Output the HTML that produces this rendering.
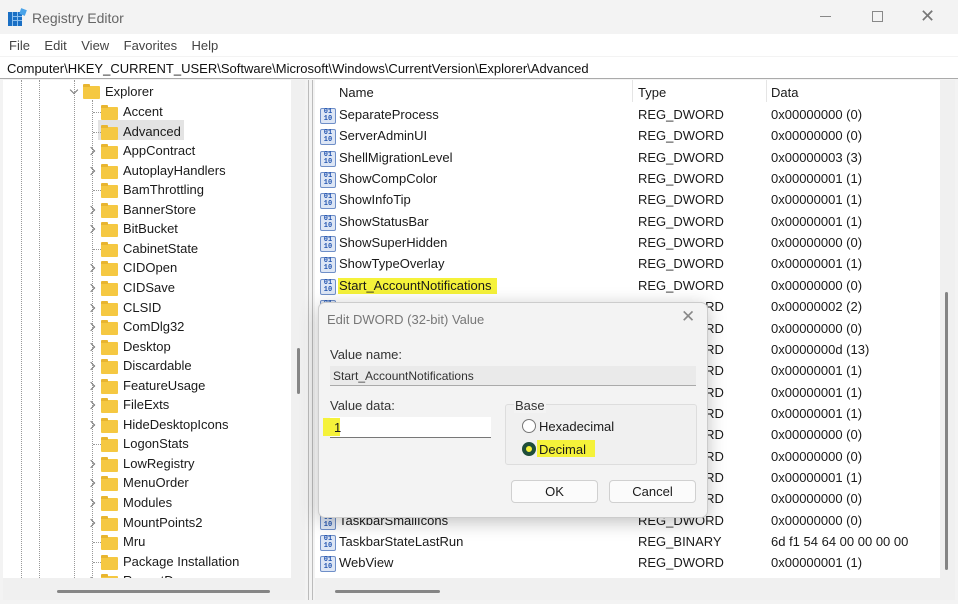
<!DOCTYPE html>
<html><head><meta charset="utf-8"><style>
*{margin:0;padding:0;box-sizing:border-box}
body{width:958px;height:604px;overflow:hidden;background:#f3f3f3;font-family:"Liberation Sans",sans-serif;font-size:13px;color:#1a1a1a;position:relative}
.a{position:absolute;white-space:nowrap}
.fold{position:absolute;width:17px;height:13px;background:#f5c842;border-radius:1px}
.fold:before{content:"";position:absolute;left:0;top:-2px;width:7px;height:3px;background:#e8b530;border-radius:1px 1px 0 0}
.chev{position:absolute;width:6px;height:6px;border-right:1.3px solid #777;border-bottom:1.3px solid #777;transform:rotate(-45deg)}
.ico{position:absolute;width:16px;height:16px;background:#dde6f5;border:1px solid #6f8fc8;border-radius:2px;font:bold 7px/7px "Liberation Mono",monospace;color:#2355b0;text-align:center;padding-top:0px}
.dot{position:absolute;border-left:1px dotted #999}
</style></head><body>
<!-- title -->
<div class="a" style="left:8px;top:9px;width:18px;height:17px">
<div style="position:absolute;left:0;top:3px;width:14px;height:14px;background:#1a6fc4"></div>
<div style="position:absolute;left:4px;top:7px;width:10px;height:1px;background:#8cc0ef"></div>
<div style="position:absolute;left:4px;top:11px;width:10px;height:1px;background:#8cc0ef"></div>
<div style="position:absolute;left:4px;top:3px;width:1px;height:14px;background:#8cc0ef"></div>
<div style="position:absolute;left:9px;top:3px;width:1px;height:14px;background:#8cc0ef"></div>
<div style="position:absolute;left:12px;top:0;width:6px;height:6px;background:#4aa3e8;transform:rotate(20deg)"></div>
</div>
<div class="a" style="left:32px;top:10px;color:#666;font-size:14px">Registry Editor</div>
<div class="a" style="left:820px;top:16px;width:11px;height:1px;background:#888"></div>
<div class="a" style="left:872px;top:11px;width:11px;height:11px;border:1px solid #888"></div>
<div class="a" style="left:920px;top:6px;font-size:18px;color:#777">✕</div>
<!-- menu -->
<div class="a" style="left:0;top:34px;width:958px;height:22px;background:#fff"></div>
<div class="a" style="left:9px;top:38px;color:#444">File&nbsp;&nbsp;&nbsp; Edit&nbsp;&nbsp;&nbsp; View&nbsp;&nbsp;&nbsp; Favorites&nbsp;&nbsp;&nbsp; Help</div>
<div class="a" style="left:0;top:57px;width:958px;height:22px;background:#fff;border-bottom:1px solid #aaa"></div>
<div class="a" style="left:7px;top:61px;font-size:13px;color:#111">Computer\HKEY_CURRENT_USER\Software\Microsoft\Windows\CurrentVersion\Explorer\Advanced</div>
<!-- tree pane -->
<div class="a" style="left:3px;top:80px;width:288px;height:498px;background:#fff;overflow:hidden">
<div class="dot" style="left:18px;top:0;height:498px"></div>
<div class="dot" style="left:36px;top:0;height:498px"></div>
<div class="dot" style="left:71px;top:0;height:498px"></div>
<div class="dot" style="left:89px;top:20px;height:478px"></div>
<div class="chev" style="left:68px;top:7px;transform:rotate(45deg)"></div>
<div class="fold" style="left:80px;top:6px"></div>
<div class="a" style="left:102px;top:4px">Explorer</div>
<div class="a" style="left:95px;top:40px;width:86px;height:20px;background:#e3e3e3"></div>
<div id="tree"></div>
</div>
<div class="a" style="left:291px;top:80px;width:14px;height:498px;background:#f0f0f0"></div>
<div class="a" style="left:297px;top:348px;width:3px;height:46px;background:#858585;border-radius:2px"></div>
<div class="a" style="left:3px;top:578px;width:302px;height:22px;background:#f0f0f0"></div>
<div class="a" style="left:57px;top:590px;width:213px;height:3px;background:#858585;border-radius:2px"></div>
<div class="a" style="left:308px;top:80px;width:1px;height:520px;background:#bbb"></div>
<div class="a" style="left:312px;top:80px;width:1px;height:520px;background:#bbb"></div>
<!-- list pane -->
<div class="a" style="left:315px;top:80px;width:625px;height:498px;background:#fff;overflow:hidden" id="list">
<div class="a" style="left:317px;top:0;width:1px;height:22px;background:#e5e5e5"></div>
<div class="a" style="left:451px;top:0;width:1px;height:22px;background:#e5e5e5"></div>
<div class="a" style="left:24px;top:5px">Name</div>
<div class="a" style="left:323px;top:5px">Type</div>
<div class="a" style="left:456px;top:5px">Data</div>
</div>
<div class="a" style="left:940px;top:80px;width:15px;height:498px;background:#f0f0f0"></div>
<div class="a" style="left:945px;top:292px;width:3px;height:278px;background:#858585;border-radius:2px"></div>
<div class="a" style="left:315px;top:578px;width:640px;height:22px;background:#f0f0f0"></div>
<div class="a" style="left:335px;top:590px;width:105px;height:3px;background:#858585;border-radius:2px"></div>
<!-- dialog -->
<div class="a" style="left:318px;top:302px;width:390px;height:216px;background:#f3f3f3;border:1px solid #ccc;border-radius:7px;box-shadow:0 4px 18px rgba(0,0,0,.25)">
<div class="a" style="left:8px;top:9px;color:#777;font-size:13px">Edit DWORD (32-bit) Value</div>
<div class="a" style="left:362px;top:4px;font-size:17px;color:#888">✕</div>
<div class="a" style="left:11px;top:44px;color:#333">Value name:</div>
<div class="a" style="left:11px;top:63px;width:366px;height:20px;background:#eaeaea;border-bottom:1px solid #aaa"></div>
<div class="a" style="left:14px;top:66px;font-size:12px;color:#333">Start_AccountNotifications</div>
<div class="a" style="left:11px;top:95px;color:#333">Value data:</div>
<div class="a" style="left:11px;top:114px;width:161px;height:21px;background:#fff;border-bottom:1px solid #777"></div>
<div class="a" style="left:4px;top:115px;width:17px;height:18px;background:#f5f23a"></div>
<div class="a" style="left:15px;top:117px">1</div>
<div class="a" style="left:186px;top:101px;width:192px;height:61px;border:1px solid #ddd;border-radius:3px;background:#f0f0f0"></div>
<div class="a" style="left:195px;top:95px;color:#333;background:#f3f3f3;padding:0 1px">Base</div>
<div class="a" style="left:203px;top:116px;width:14px;height:14px;border:1px solid #777;border-radius:50%;background:#fff"></div>
<div class="a" style="left:220px;top:116px">Hexadecimal</div>
<div class="a" style="left:218px;top:137px;width:58px;height:17px;background:#f5f23a"></div>
<div class="a" style="left:203px;top:139px;width:14px;height:14px;border:4px solid #1f4e3a;border-radius:50%;background:#f5f23a"></div>
<div class="a" style="left:220px;top:139px">Decimal</div>
<div class="a" style="left:192px;top:177px;width:87px;height:23px;background:#fbfbfb;border:1px solid #d0d0d0;border-radius:4px;text-align:center;line-height:21px">OK</div>
<div class="a" style="left:290px;top:177px;width:87px;height:23px;background:#fbfbfb;border:1px solid #d0d0d0;border-radius:4px;text-align:center;line-height:21px">Cancel</div>
</div>
<script>
var t=[["Accent",0],["Advanced",0],["AppContract",1],["AutoplayHandlers",1],["BamThrottling",0],["BannerStore",1],["BitBucket",1],["CabinetState",0],["CIDOpen",1],["CIDSave",1],["CLSID",1],["ComDlg32",1],["Desktop",1],["Discardable",1],["FeatureUsage",1],["FileExts",1],["HideDesktopIcons",1],["LogonStats",0],["LowRegistry",1],["MenuOrder",1],["Modules",1],["MountPoints2",1],["Mru",0],["Package Installation",0],["RecentDocs",1]];
var h="",tr=document.getElementById("tree");
t.forEach(function(r,i){var y=24+i*19.55;
if(r[1])h+='<div class="chev" style="left:85px;top:'+(y+5)+'px"></div>';else h+='<div class="dot" style="left:90px;top:'+(y+8)+'px;width:8px;border-left:0;border-top:1px dotted #999;height:0"></div>';
h+='<div class="fold" style="left:98px;top:'+(y+3)+'px"></div><div class="a" style="left:120px;top:'+y+'px">'+r[0]+'</div>';});
tr.innerHTML=h;
var L=[["SeparateProcess","0x00000000 (0)"],["ServerAdminUI","0x00000000 (0)"],["ShellMigrationLevel","0x00000003 (3)"],["ShowCompColor","0x00000001 (1)"],["ShowInfoTip","0x00000001 (1)"],["ShowStatusBar","0x00000001 (1)"],["ShowSuperHidden","0x00000000 (0)"],["ShowTypeOverlay","0x00000001 (1)"],["Start_AccountNotifications","0x00000000 (0)"],["Start_Layout","0x00000002 (2)"],["Start_NotifyNewApps","0x00000000 (0)"],["Start_TrackDocs","0x0000000d (13)"],["Start_TrackProgs","0x00000001 (1)"],["StartMenuInit","0x00000001 (1)"],["StoreAppsOnTaskbar","0x00000001 (1)"],["TaskbarAnimations","0x00000000 (0)"],["TaskbarAutoHideInTabletMode","0x00000000 (0)"],["TaskbarDa","0x00000001 (1)"],["TaskbarMn","0x00000000 (0)"],["TaskbarSmallIcons","0x00000000 (0)"],["TaskbarStateLastRun","6d f1 54 64 00 00 00 00"],["WebView","0x00000001 (1)"],["WinXMigrationLevel","0x00000001 (1)"]];
h="";
L.forEach(function(r,i){var y=27+i*21.35;
h+='<div class="ico" style="left:5px;top:'+(y+1)+'px">01<br>10</div>';
if(i==8)h+='<div class="a" style="left:23px;top:'+(y)+'px;width:159px;height:16px;background:#f5f23a"></div>';
h+='<div class="a" style="left:24px;top:'+y+'px">'+r[0]+'</div><div class="a" style="left:323px;top:'+y+'px">'+(i==20?"REG_BINARY":"REG_DWORD")+'</div><div class="a" style="left:456px;top:'+y+'px">'+r[1]+'</div>';});
document.getElementById("list").insertAdjacentHTML("beforeend",h);
</script>
</body></html>
